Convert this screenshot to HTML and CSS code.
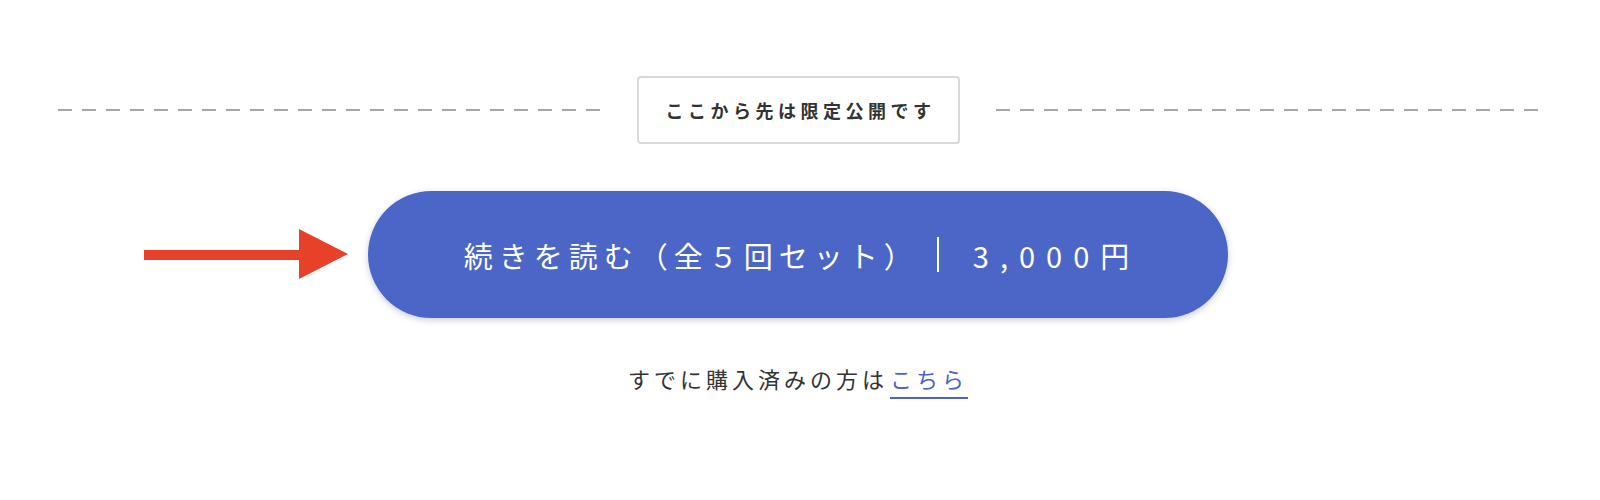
FILE: index.html
```html
<!DOCTYPE html>
<html lang="ja">
<head>
    <meta charset="UTF-8">
    <meta name="viewport" content="width=device-width, initial-scale=1.0">
    <title>続きを読む</title>
    <link rel="stylesheet" href="styles.css">
</head>
<body>
    <div class="paywall">
        <div class="divider">
            <span class="divider-line"></span>
            <p class="divider-label">ここから先は限定公開です</p>
            <span class="divider-line"></span>
        </div>

        <div class="purchase">
            <a href="#" class="purchase-button">
                <svg class="pointer" viewBox="0 0 204 50" width="204" height="50" aria-hidden="true">
                    <rect x="0" y="21" width="156" height="10" fill="#e8412a"/>
                    <polygon points="155,0 204,25 155,50" fill="#e8412a"/>
                </svg>
                <span class="purchase-title">続きを読む（全５回セット）</span>
                <span class="purchase-sep"></span>
                <span class="purchase-price">3,000円</span>
            </a>
        </div>

        <p class="already">すでに購入済みの方は<a href="#">こちら</a></p>
    </div>
</body>
</html>
```

FILE: styles.css
```css
body {
    margin: 0;
    background: #fff;
    color: #333;
    font-family: "Noto Sans CJK JP", "Noto Sans", sans-serif;
}

.paywall {
    padding: 76px 62px 0 58px;
}

/* dashed rule with the label box */
.divider {
    display: flex;
    align-items: center;
    gap: 36px;
}

.divider-line {
    flex: 1;
    height: 2px;
    background: repeating-linear-gradient(to right, #a6a6a6 0 14px, transparent 14px 24px);
}

.divider-label {
    margin: 0;
    padding: 20px 22px 20px 27px;
    border: 2px solid #d9d9d9;
    border-radius: 4px;
    font-size: 18px;
    font-weight: bold;
    line-height: 24px;
    letter-spacing: 4.5px;
    color: #333;
}

.purchase {
    display: flex;
    justify-content: center;
    margin-top: 47px;
}

.purchase-button {
    position: relative;
    display: flex;
    align-items: center;
    justify-content: center;
    box-sizing: border-box;
    width: 860px;
    height: 127px;
    padding-left: 8px;
    border-radius: 64px;
    background: #4b66c6;
    box-shadow: 0 2px 6px rgba(40, 50, 110, 0.25);
    color: #fff;
    text-decoration: none;
    font-size: 29px;
}

.pointer {
    position: absolute;
    right: calc(100% + 20px);
    top: 38px;
}

.purchase-title {
    letter-spacing: 6px;
}

.purchase-sep {
    width: 2px;
    height: 35px;
    margin: 0 34px 0 18px;
    background: #fff;
}

.purchase-price {
    letter-spacing: 11px;
}

.already {
    margin: 45px 0 0;
    text-align: center;
    font-size: 22px;
    line-height: 31px;
    letter-spacing: 4px;
    color: #333;
}

.already a {
    display: inline-block;
    margin-left: 2px;
    color: #4a64c9;
    text-decoration: none;
    line-height: 26px;
    padding: 0 0 6px 0;
    border-bottom: 2px solid #4a64c9;
}
```
